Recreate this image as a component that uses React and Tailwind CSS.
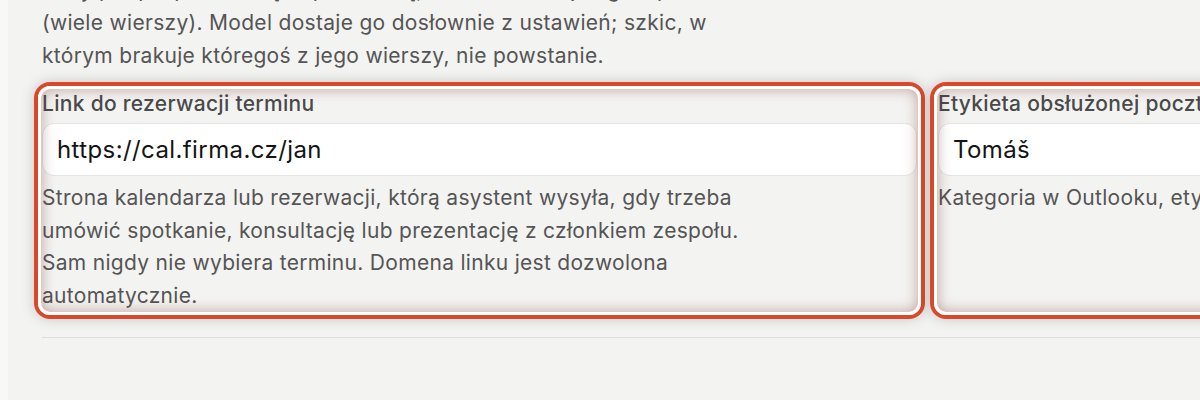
const Highlight = () => (
  <div className="pointer-events-none absolute -left-[8px] -right-[8px] -top-[8px] -bottom-[6px] rounded-[16px] border-[4px] border-[#d9482b] shadow-[0_0_14px_rgba(0,0,0,0.18)]">
    <div className="h-full w-full rounded-[12px] border-[3px] border-white shadow-[inset_0_0_14px_rgba(110,40,30,0.4)]" />
  </div>
);

const Field = ({ label, value, children }) => (
  <div className="relative">
    <div className="text-[21px] font-medium leading-[28px] tracking-[0.3px] text-[#4a4a4a]">{label}</div>
    <input
      className="mt-[5px] h-[53px] w-full rounded-[12px] border border-[#e4e4e2] bg-white px-[14px] text-[24px] tracking-[0.4px] text-[#141414] outline-none"
      defaultValue={value}
    />
    <p className="mt-[6px] max-w-[720px] text-[21px] leading-[32.7px] tracking-[0.3px] text-[#555555]">{children}</p>
    <Highlight />
  </div>
);

export default function App() {
  return (
    <div className="flex h-[400px] overflow-hidden bg-[#f3f3f1] font-['Inter','Noto_Sans',sans-serif]">
      <div className="w-[8px] shrink-0 bg-[#f8f8f7]" />
      <div className="min-w-0 flex-1 pl-[34px]">
        <p className="-mt-[27px] max-w-[720px] text-[21px] leading-[33px] tracking-[0.3px] text-[#555555]">
          Stały podpis pod każdą odpowiedzią, dokładnie tak jak go wpiszesz
          <br />
          (wiele wierszy). Model dostaje go dosłownie z ustawień; szkic, w którym brakuje któregoś z jego wierszy, nie powstanie.
        </p>
        <div className="mt-[18px] grid grid-cols-[875px_875px] gap-x-[21px]">
          <Field label="Link do rezerwacji terminu" value="https://cal.firma.cz/jan">
            Strona kalendarza lub rezerwacji, którą asystent wysyła, gdy trzeba umówić spotkanie, konsultację lub prezentację z członkiem zespołu. Sam nigdy nie wybiera terminu. Domena linku jest dozwolona automatycznie.
          </Field>
          <Field label="Etykieta obsłużonej poczty" value="Tomáš">
            Kategoria w Outlooku, etykieta w Gmailu.
          </Field>
        </div>
        <div className="mt-[24px] border-t border-[#dddddb]" />
      </div>
    </div>
  );
}
